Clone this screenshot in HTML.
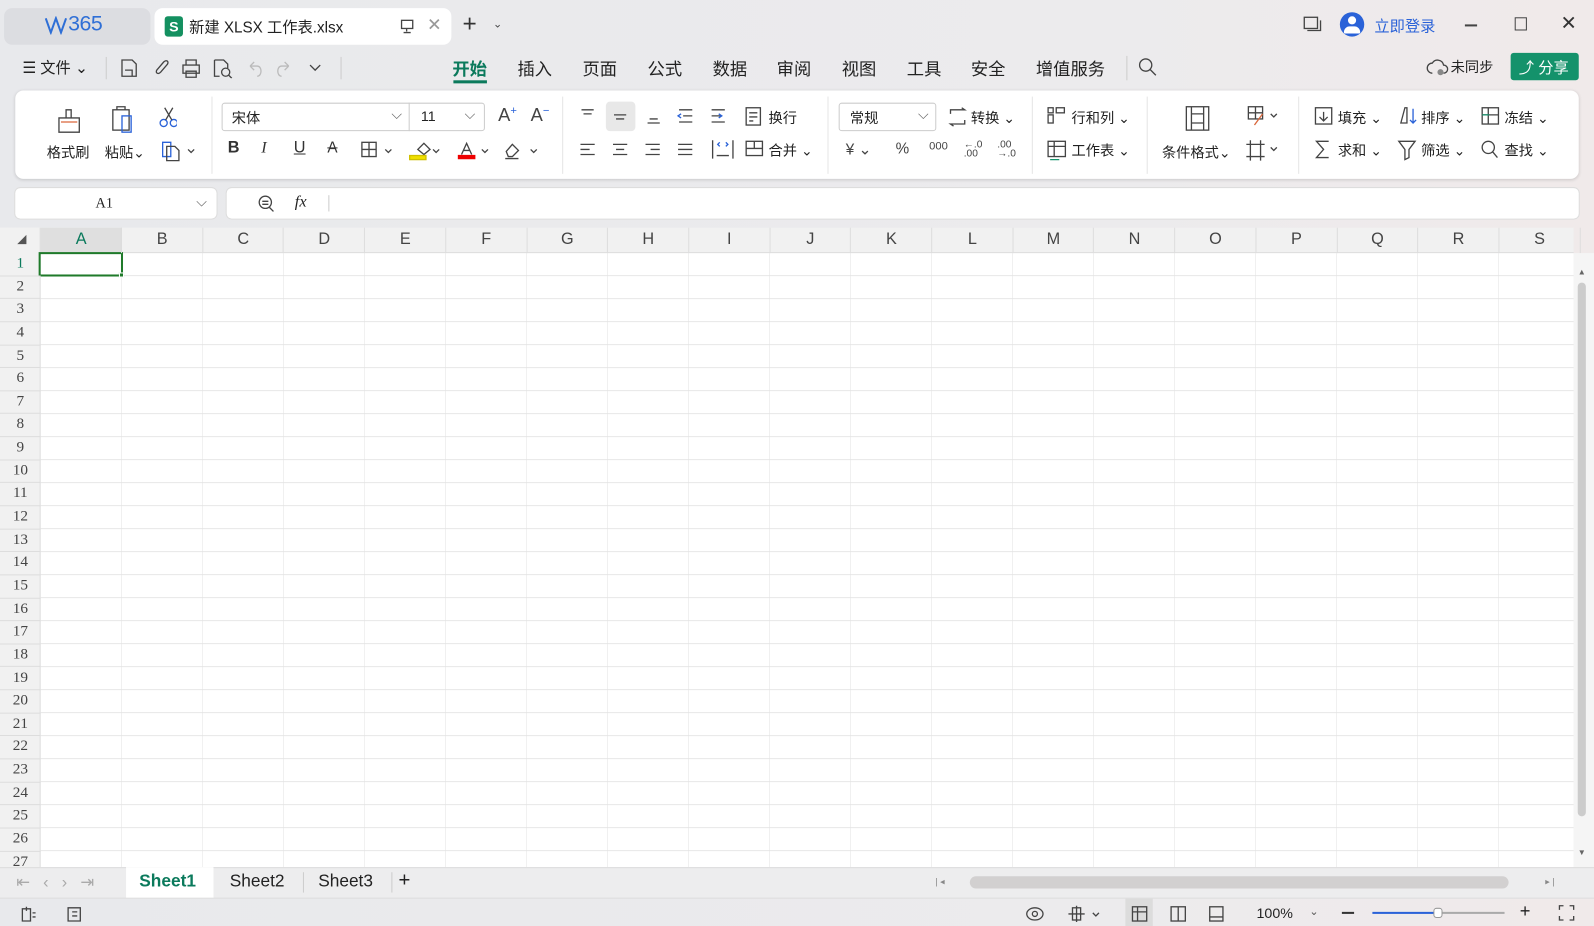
<!DOCTYPE html>
<html><head><meta charset="utf-8">
<style>
*{margin:0;padding:0;box-sizing:border-box}
html,body{width:1594px;height:926px;overflow:hidden;background:#e8e8eb}
#w{position:absolute;left:0;top:0;width:1568px;height:911px;transform:scale(1.01658);transform-origin:0 0;font-family:"Liberation Sans","Noto Sans CJK SC",sans-serif;color:#222;background:linear-gradient(90deg,#e8e9ec,#ecebed 70%,#f0eaea)}
.a{position:absolute}
.t{position:absolute;white-space:nowrap}
.ic{position:absolute;stroke:#444;fill:none;stroke-width:1.3}
</style></head><body><div id="w">
<!-- title bar -->
<div class="a" style="left:4px;top:8px;width:144px;height:36px;background:#dcdde1;border-radius:8px"></div>
<svg class="a" style="left:44px;top:16px" width="22" height="18" fill="none" stroke="#2f6fd6" stroke-width="2"><path d="M1 2l5 14 5-14 5 14 5-14"/></svg>
<div class="t" style="left:67px;top:12px;font-size:21px;color:#2f6fd6;letter-spacing:-0.5px">365</div>
<div class="a" style="left:152px;top:8px;width:292px;height:36px;background:#fff;border-radius:8px"></div>
<div class="a" style="left:162px;top:16px;width:18px;height:20px;background:#149060;border-radius:3px;color:#fff;font-size:14px;font-weight:bold;text-align:center;line-height:20px">S</div>
<div class="t" style="left:186px;top:16px;font-size:15px">新建 XLSX 工作表.xlsx</div>
<svg class="ic" style="left:393px;top:19px" width="16" height="14"><rect x="2" y="1" width="11" height="8"/><path d="M7 9v3M4 13h7"/></svg>
<div class="t" style="left:420px;top:15px;font-size:17px;color:#999">✕</div>
<div class="t" style="left:455px;top:10px;font-size:24px;color:#333">+</div>
<div class="t" style="left:485px;top:17px;font-size:11px;color:#444">⌄</div>
<svg class="ic" style="left:1282px;top:16px" width="18" height="16"><rect x="1" y="1" width="13" height="11"/><path d="M4 14h13V4"/></svg>
<div class="a" style="left:1318px;top:12px;width:24px;height:24px;border-radius:50%;background:#2a62d8"></div>
<div class="a" style="left:1326px;top:16px;width:8px;height:8px;border-radius:50%;background:#fff"></div>
<div class="a" style="left:1322px;top:26px;width:16px;height:7px;border-radius:8px 8px 2px 2px;background:#fff"></div>
<div class="t" style="left:1352px;top:15px;font-size:15px;color:#2a62d8">立即登录</div>
<div class="a" style="left:1441px;top:24px;width:12px;height:1.5px;background:#444"></div>
<div class="a" style="left:1490px;top:17px;width:12px;height:13px;border:1.5px solid #444"></div>
<div class="t" style="left:1535px;top:12px;font-size:19px;color:#333">✕</div>
<!-- menu row -->
<div class="t" style="left:22px;top:56px;font-size:15px">☰ 文件 ⌄</div>
<div class="a" style="left:104px;top:56px;width:1px;height:22px;background:#ccc"></div>
<svg class="ic" style="left:118px;top:57px" width="200" height="20"><path d="M2 2h10l4 4v12H2z M5 12h7v6"/><path d="M40 14c-3 3 -6 0-3-3l6-7c3-3 6 0 3 3z"/><rect x="62" y="7" width="16" height="8"/><path d="M65 7V2h10v5M65 13h10v6H65z"/><path d="M93 2h9l4 4v4M93 2v16h5"/><circle cx="104" cy="14" r="4"/><path d="M107 17l3 3"/><path stroke="#bbb" d="M128 8l4-4M128 8l4 4M128 8h7c5 0 5 10 0 10"/><path stroke="#bbb" d="M166 8l-4-4M166 8l-4 4M166 8h-7c-5 0-5 10 0 10"/><path d="M187 7l5 5 5-5"/></svg>
<div class="a" style="left:335px;top:56px;width:1px;height:22px;background:#ccc"></div>
<div class="t" style="left:445px;top:54px;font-size:17px;color:#0b7a5c;font-weight:bold">开始</div>
<div class="a" style="left:446px;top:79px;width:33px;height:3px;background:#0b7a5c"></div>
<div class="t" style="left:509px;top:54px;font-size:17px">插入</div>
<div class="t" style="left:573px;top:54px;font-size:17px">页面</div>
<div class="t" style="left:637px;top:54px;font-size:17px">公式</div>
<div class="t" style="left:701px;top:54px;font-size:17px">数据</div>
<div class="t" style="left:764px;top:54px;font-size:17px">审阅</div>
<div class="t" style="left:828px;top:54px;font-size:17px">视图</div>
<div class="t" style="left:892px;top:54px;font-size:17px">工具</div>
<div class="t" style="left:955px;top:54px;font-size:17px">安全</div>
<div class="t" style="left:1019px;top:54px;font-size:17px">增值服务</div>
<div class="a" style="left:1108px;top:55px;width:1px;height:24px;background:#ccc"></div>
<svg class="ic" style="left:1119px;top:56px" width="20" height="20"><circle cx="8" cy="8" r="6"/><path d="M12 12l6 6"/></svg>
<svg class="ic" style="left:1403px;top:57px" width="22" height="18"><path d="M6 15a5 5 0 0 1 0-10a6 6 0 0 1 11 2a4 4 0 0 1 0 8"/><circle cx="14" cy="14" r="3" fill="#888" stroke="none"/></svg>
<div class="t" style="left:1427px;top:56px;font-size:14px">未同步</div>
<div class="a" style="left:1486px;top:52px;width:67px;height:27px;background:#14926b;border-radius:3px"></div>
<div class="t" style="left:1494px;top:56px;font-size:15px;color:#fff">⤴ 分享</div>
<!-- ribbon -->
<div class="a" style="left:15px;top:89px;width:1538px;height:87px;background:#fff;border-radius:8px;box-shadow:0 1px 3px rgba(0,0,0,.15)"></div>
<div class="a" style="left:208px;top:95px;width:1px;height:76px;background:#e5e5e5"></div>
<div class="a" style="left:553px;top:95px;width:1px;height:76px;background:#e5e5e5"></div>
<div class="a" style="left:814px;top:95px;width:1px;height:76px;background:#e5e5e5"></div>
<div class="a" style="left:1015px;top:95px;width:1px;height:76px;background:#e5e5e5"></div>
<div class="a" style="left:1128px;top:95px;width:1px;height:76px;background:#e5e5e5"></div>
<div class="a" style="left:1277px;top:95px;width:1px;height:76px;background:#e5e5e5"></div>
<svg class="ic" style="left:54px;top:104px" width="120" height="28"><path d="M4 12h20v14H4z M11 12V4h5v8"/><path stroke="#d9663a" d="M6 16h16"/><rect x="57" y="4" width="16" height="20"/><path d="M61 4V1h8v3"/><rect stroke="#2a62d8" x="66" y="10" width="9" height="16"/><circle stroke="#2a62d8" cx="107" cy="17" r="3.5"/><circle stroke="#2a62d8" cx="117" cy="17" r="3.5"/><path d="M109 14L116 2M115 14L108 2"/></svg>
<div class="t" style="left:46px;top:140px;font-size:14px">格式刷</div>
<div class="t" style="left:103px;top:140px;font-size:14px">粘贴⌄</div>
<svg class="ic" style="left:159px;top:138px" width="34" height="22"><path stroke="#2a62d8" d="M1 2h8v14H1z"/><path d="M5 6h8l4 4v10H5z"/><path d="M26 9l3 3 3-3"/></svg>
<div class="a" style="left:218px;top:101px;width:259px;height:28px;border:1px solid #ccc;border-radius:3px"></div>
<div class="a" style="left:402px;top:101px;width:1px;height:28px;background:#ccc"></div>
<div class="t" style="left:228px;top:106px;font-size:14px">宋体</div>
<div class="t" style="left:385px;top:104px;font-size:14px;color:#666">⌵</div>
<div class="t" style="left:414px;top:106px;font-size:14px">11</div>
<div class="t" style="left:457px;top:104px;font-size:14px;color:#666">⌵</div>
<div class="t" style="left:490px;top:103px;font-size:18px;color:#444">A<sup style="font-size:11px;color:#2a62d8">+</sup></div>
<div class="t" style="left:522px;top:103px;font-size:18px;color:#444">A<sup style="font-size:11px;color:#2a62d8">−</sup></div>
<div class="t" style="left:224px;top:137px;font-size:16px;font-weight:bold;color:#333">B</div>
<div class="t" style="left:257px;top:137px;font-size:16px;font-style:italic;color:#333;font-family:'Liberation Serif'">I</div>
<div class="t" style="left:289px;top:137px;font-size:16px;text-decoration:underline;color:#333">U</div>
<div class="t" style="left:322px;top:137px;font-size:15px;text-decoration:line-through;color:#333">A</div>
<svg class="ic" style="left:355px;top:139px" width="180" height="20"><rect x="1" y="1" width="14" height="14"/><path d="M8 1v14M1 8h14"/><path d="M24 8l3 3 3-3"/><path d="M56 8l6-6 6 6-6 5z"/><rect fill="#f0e000" stroke="#d0c000" x="48" y="14" width="16" height="4"/><path d="M71 8l3 3 3-3"/><path d="M99 13l5-11 5 11M101 9h6"/><rect fill="#e00" stroke="#e00" x="96" y="14" width="16" height="3"/><path d="M119 8l3 3 3-3"/><path d="M143 10l6-7 6 6-6 6h-4zM142 17h13"/><path d="M167 8l3 3 3-3"/></svg>
<div class="a" style="left:596px;top:100px;width:29px;height:29px;background:#e8e8e8;border-radius:4px"></div>
<svg class="ic" style="left:569px;top:104px" width="240" height="56"><path d="M3 4h12M5 8h8"/><path d="M35 9h12M37 13h8"/><path d="M68 17h12M70 13h8"/><path d="M99 4h13M103 10h9M99 16h13"/><path stroke="#2a62d8" d="M101 8l-3 2 3 2"/><path d="M131 4h13M131 10h9M131 16h13"/><path stroke="#2a62d8" d="M138 8l3 2-3 2"/><rect x="165" y="2" width="14" height="17"/><path d="M168 7h8M168 11h8M168 15h4"/><path d="M2 38h14M2 43h9M2 48h14"/><path d="M34 38h14M37 43h8M34 48h14"/><path d="M66 38h14M71 43h9M66 48h14"/><path d="M98 38h14M98 43h14M98 48h14"/><path d="M132 34v18M152 34v18M136 49h12"/><path stroke="#2a62d8" d="M139 36l-2 2 2 2M145 36l2 2-2 2"/><rect x="165" y="35" width="16" height="14"/><path d="M165 42h16M173 35v7"/></svg>
<div class="t" style="left:756px;top:106px;font-size:14px">换行</div>
<div class="t" style="left:756px;top:138px;font-size:14px">合并 ⌄</div>
<div class="a" style="left:825px;top:101px;width:96px;height:28px;border:1px solid #ccc;border-radius:3px"></div>
<div class="t" style="left:836px;top:106px;font-size:14px">常规</div>
<div class="t" style="left:903px;top:104px;font-size:14px;color:#666">⌵</div>
<svg class="ic" style="left:932px;top:105px" width="20" height="20"><path d="M3 7V3h14l-3-2M17 13v4H3l3 2"/></svg>
<div class="t" style="left:955px;top:106px;font-size:14px">转换 ⌄</div>
<div class="t" style="left:832px;top:138px;font-size:15px;color:#444">¥ ⌄</div>
<div class="t" style="left:881px;top:138px;font-size:15px;color:#444">%</div>
<div class="t" style="left:914px;top:138px;font-size:11px;color:#444">000</div>
<div class="t" style="left:948px;top:138px;font-size:10px;line-height:9px;color:#444">←.0<br>.00</div>
<div class="t" style="left:981px;top:138px;font-size:10px;line-height:9px;color:#444">.00<br>→.0</div>
<svg class="ic" style="left:1030px;top:104px" width="22" height="56"><rect x="1" y="2" width="5" height="5"/><rect x="1" y="9" width="5" height="8"/><rect x="9" y="2" width="8" height="5"/><rect x="1" y="35" width="17" height="15"/><path d="M1 40h17M7 35v15"/><path stroke="#14926b" d="M3 53h9"/></svg>
<div class="t" style="left:1054px;top:106px;font-size:14px">行和列 ⌄</div>
<div class="t" style="left:1054px;top:138px;font-size:14px">工作表 ⌄</div>
<svg class="ic" style="left:1166px;top:103px" width="100" height="58"><rect x="1" y="2" width="22" height="23"/><path d="M6 2v23M18 2v23M6 9h12M6 18h12"/><rect x="62" y="2" width="14" height="12"/><path d="M69 2v12M62 8h14"/><path stroke="#d9663a" d="M68 20l8-11"/><path d="M84 9l3 3 3-3"/><path d="M64 35v20M74 35v20M60 39h18M60 51h18M84 42l3 3 3-3"/></svg>
<div class="t" style="left:1143px;top:140px;font-size:14px">条件格式⌄</div>
<svg class="ic" style="left:1292px;top:104px" width="200" height="56"><rect x="2" y="2" width="16" height="16"/><path d="M10 6v9M6 11l4 4 4-4"/><path d="M86 17l4-15h2v15z"/><path stroke="#2a62d8" d="M98 3v14M95 14l3 3 3-3"/><rect x="166" y="2" width="16" height="16"/><path d="M166 9h16M172 2v16"/><path stroke="#14926b" d="M166 9h7"/><path d="M15 35H3l7 8-7 8h12"/><path d="M84 35h16l-6 8v8l-4 2V43z"/><circle cx="172" cy="41" r="6"/><path d="M176 45l5 6"/></svg>
<div class="t" style="left:1316px;top:106px;font-size:14px">填充 ⌄</div>
<div class="t" style="left:1398px;top:106px;font-size:14px">排序 ⌄</div>
<div class="t" style="left:1480px;top:106px;font-size:14px">冻结 ⌄</div>
<div class="t" style="left:1316px;top:138px;font-size:14px">求和 ⌄</div>
<div class="t" style="left:1398px;top:138px;font-size:14px">筛选 ⌄</div>
<div class="t" style="left:1480px;top:138px;font-size:14px">查找 ⌄</div>
<!-- formula bar -->
<div class="a" style="left:15px;top:185px;width:198px;height:30px;background:#fff;border-radius:5px;box-shadow:0 0 0 1px #ddd"></div>
<div class="t" style="left:94px;top:193px;font-size:14px;font-family:'Liberation Serif'">A1</div>
<div class="t" style="left:193px;top:190px;font-size:14px;color:#666">⌵</div>
<div class="a" style="left:223px;top:185px;width:1330px;height:30px;background:#fff;border-radius:5px;box-shadow:0 0 0 1px #ddd"></div>
<svg class="ic" style="left:253px;top:191px" width="18" height="18"><circle cx="8" cy="8" r="6"/><path d="M12 13l4 4M5 7h6M5 10h6"/></svg>
<div class="t" style="left:290px;top:190px;font-size:16px;font-style:italic;font-family:'Liberation Serif'">fx</div>
<div class="a" style="left:323px;top:192px;width:1px;height:16px;background:#ccc"></div>
<!-- grid -->
<div class="a" style="left:0;top:224px;width:1548px;height:25px;background:#f1f1f1;border-bottom:1px solid #ddd"></div>
<div class="a" style="left:0;top:224px;width:40px;height:629px;background:#f1f1f1;border-right:1px solid #ddd"></div>
<div class="a" style="left:40px;top:224px;width:80px;height:25px;background:#dfdfdf"></div>
<div class="t" style="left:17px;top:229px;font-size:9px;color:#555">◢</div>
<div class="a" style="left:40px;top:249px;width:1508px;height:604px;background-color:#fff;background-image:linear-gradient(90deg,transparent 79px,#e2e2e2 79px),linear-gradient(transparent 21.64px,#e6e6e6 21.64px);background-size:79.7px 100%,100% 22.64px"></div>
<div class="a" style="left:38px;top:248px;width:83px;height:24px;border:2px solid #1f7a2a"></div>
<div class="a" style="left:117px;top:268px;width:5px;height:5px;background:#1f7a2a;border:1px solid #fff"></div>
<div id="cols"></div>
<div class="a" style="left:1548px;top:249px;width:20px;height:604px;background:#f5f5f5"></div>
<div class="a" style="left:1552px;top:278px;width:8px;height:525px;background:#ccc;border-radius:4px"></div>
<div class="t" style="left:1552px;top:263px;font-size:8px;color:#666">▲</div>
<div class="t" style="left:1552px;top:834px;font-size:8px;color:#666">▼</div>
<!-- sheet bar -->
<div class="a" style="left:0;top:853px;width:1568px;height:31px;background:#ededee;border-top:1px solid #ddd;border-bottom:1px solid #ddd"></div>
<div class="t" style="left:16px;top:858px;font-size:16px;color:#aaa;letter-spacing:13px">⇤‹›⇥</div>
<div class="a" style="left:124px;top:853px;width:86px;height:30px;background:#fff"></div>
<div class="t" style="left:137px;top:857px;font-size:17px;color:#0b7a5c;font-weight:bold">Sheet1</div>
<div class="t" style="left:226px;top:857px;font-size:17px">Sheet2</div>
<div class="a" style="left:298px;top:858px;width:1px;height:20px;background:#ccc"></div>
<div class="t" style="left:313px;top:857px;font-size:17px">Sheet3</div>
<div class="a" style="left:385px;top:858px;width:1px;height:20px;background:#ccc"></div>
<div class="t" style="left:392px;top:855px;font-size:20px">+</div>
<div class="t" style="left:920px;top:862px;font-size:9px;color:#888">| ◂</div>
<div class="a" style="left:954px;top:862px;width:530px;height:12px;background:#d2d0d0;border-radius:6px"></div>
<div class="t" style="left:1520px;top:862px;font-size:9px;color:#888">▸ |</div>
<!-- status bar -->
<div class="a" style="left:1107px;top:884px;width:27px;height:27px;background:#dcdcdc"></div>
<svg class="ic" style="left:20px;top:890px" width="60" height="18"><path d="M2 4h8v12H2zM6 2v4M12 8h3M12 12h3"/><path d="M47 3h12v13H47zM51 7h5M51 11h5"/></svg>
<svg class="ic" style="left:1009px;top:890px" width="200" height="18"><ellipse cx="9" cy="9" rx="8" ry="6"/><circle cx="9" cy="9" r="2.5"/><rect x="46" y="3" width="8" height="12"/><path d="M50 1v16M42 9h16M66 8l3 3 3-3"/><rect x="105" y="2" width="14" height="14"/><path d="M105 7h14M110 2v14"/><rect x="143" y="2" width="14" height="14"/><path d="M150 2v14"/><rect x="181" y="2" width="13" height="14"/><path d="M181 12h13"/></svg>
<div class="t" style="left:1236px;top:890px;font-size:14px">100%</div>
<div class="t" style="left:1288px;top:890px;font-size:11px;color:#555">⌄</div>
<div class="a" style="left:1320px;top:897px;width:12px;height:2px;background:#333"></div>
<div class="a" style="left:1350px;top:897px;width:65px;height:2px;background:#2a62d8"></div>
<div class="a" style="left:1415px;top:897px;width:65px;height:2px;background:#aaa"></div>
<div class="a" style="left:1410px;top:893px;width:9px;height:10px;background:#fff;border:1px solid #999;border-radius:3px"></div>
<div class="t" style="left:1495px;top:886px;font-size:18px">+</div>
<svg class="ic" style="left:1532px;top:889px" width="18" height="18"><path d="M2 6V2h4M12 2h4v4M16 12v4h-4M6 16H2v-4"/></svg>
</div>
<script>
var c=document.getElementById('cols'),h='';
var L='ABCDEFGHIJKLMNOPQRS';
for(var i=0;i<19;i++){h+='<div class="t" style="left:'+(40+i*79.7)+'px;top:227px;width:79.7px;text-align:center;font-size:16px;color:'+(i?'#444':'#0b7a5c')+'">'+L[i]+'</div>';
h+='<div class="a" style="left:'+(119+i*79.7)+'px;top:224px;width:1px;height:25px;background:#ddd"></div>';}
for(var r=0;r<27;r++){h+='<div class="t" style="left:0;top:'+(251+r*22.64)+'px;width:40px;text-align:center;font-size:15px;color:'+(r?'#444':'#0b7a5c')+';font-family:\'Liberation Serif\',serif">'+(r+1)+'</div>';
h+='<div class="a" style="left:0;top:'+(270.6+r*22.64)+'px;width:40px;height:1px;background:#ddd"></div>';}
c.innerHTML=h;
</script>
</body></html>
